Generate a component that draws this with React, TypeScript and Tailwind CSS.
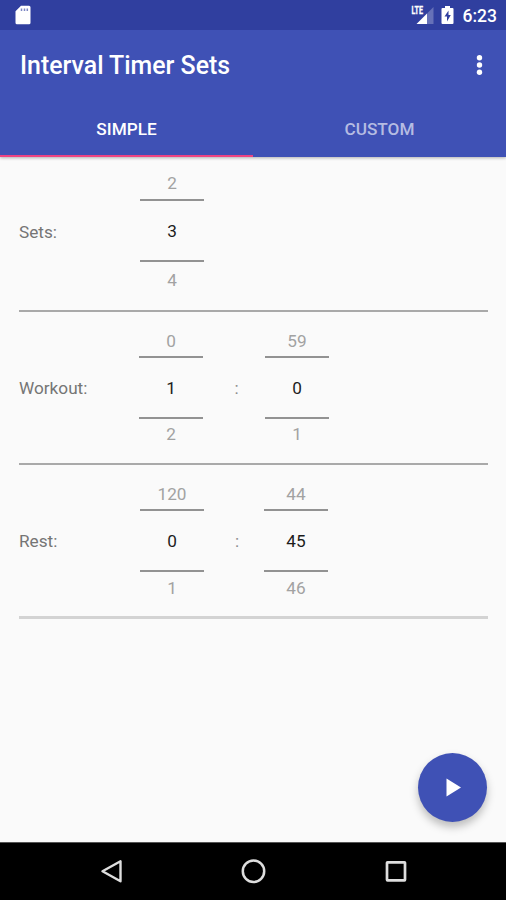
import { useState } from 'react';
import clsx from 'clsx';

interface Wheel {
  prev: number;
  value: number;
  next: number;
}

interface TimerRow {
  label: string;
  wheels: Wheel[];
  // spacing differs a little from row to row
  row: string;
  labelTop: string;
  gap: string;
  prev: string;
  next: string;
  colon: string;
  divider: string;
}

const rows: TimerRow[] = [
  {
    label: 'Sets:',
    wheels: [{ prev: 2, value: 3, next: 4 }],
    row: 'h-[153px] pt-[16px]',
    labelTop: 'mt-[49px]',
    gap: 'ml-[121px]',
    prev: 'mb-[6px]',
    next: 'mt-[8px]',
    colon: '',
    divider: 'h-[2px] bg-[#a9a9a9]',
  },
  {
    label: 'Workout:',
    wheels: [
      { prev: 0, value: 1, next: 2 },
      { prev: 59, value: 0, next: 1 },
    ],
    row: 'h-[151px] pt-[19px]',
    labelTop: 'mt-[47px]',
    gap: 'ml-[120px]',
    prev: 'mb-[5px]',
    next: 'mt-[5px]',
    colon: 'w-[62px] pl-[5px]',
    divider: 'h-[2px] bg-[#a9a9a9]',
  },
  {
    label: 'Rest:',
    wheels: [
      { prev: 120, value: 0, next: 1 },
      { prev: 44, value: 45, next: 46 },
    ],
    row: 'h-[151px] pt-[19px]',
    labelTop: 'mt-[47px]',
    gap: 'ml-[121px]',
    prev: 'mb-[5px]',
    next: 'mt-[6px]',
    colon: 'w-[60px] pl-[6px]',
    divider: 'h-[3px] bg-[#d3d3d3]',
  },
];

function NumberWheel({ wheel, prev, next }: { wheel: Wheel; prev: string; next: string }) {
  return (
    <div className="w-16 text-center text-[17.2px] leading-5">
      <div className={clsx('text-[#a2a2a2]', prev)}>{wheel.prev}</div>
      <div className="flex h-[63px] items-center justify-center border-y-2 border-[#929292] pt-[1px] text-[#1c1c1c]">
        {wheel.value}
      </div>
      <div className={clsx('text-[#a2a2a2]', next)}>{wheel.next}</div>
    </div>
  );
}

function StatusBar() {
  return (
    <div className="flex h-[30px] items-center bg-[#303f9f] pr-[9px] pl-[15px] text-white">
      <svg width="16" height="20" viewBox="0 0 16 20" fill="currentColor">
        <path d="M6 .8h8A1.500 1.500 0 0 1 15.500 2.300v15.500a1.500 1.500 0 0 1-1.500 1.500H2a1.500 1.500 0 0 1-1.500-1.500V6.300z" />
        <path d="M6.500 3.500V6M9.500 3.500V6M12.300 3.500V6" stroke="#7d87c4" strokeWidth="1.500" />
      </svg>
      <div className="ml-auto flex items-center">
        <svg width="24" height="20" viewBox="0 0 24 20">
          <path d="M22.500 2v17H16V8.500z" fill="#6671b8" />
          <path d="M16 8.500V19H5.500z" fill="#fff" />
          <text x="0.500" y="9.300" fill="#fff" stroke="#fff" strokeWidth="0.300" fontFamily="Roboto" fontWeight="700" fontSize="10" textLength="11.500" lengthAdjust="spacingAndGlyphs">
            LTE
          </text>
        </svg>
        <svg className="ml-[6px]" width="13" height="20" viewBox="0 0 13 20">
          <path d="M4 1h5v2h2.500a1 1 0 0 1 1 1v14a1 1 0 0 1-1 1h-10a1 1 0 0 1-1-1V4a1 1 0 0 1 1-1H4z" fill="#fff" />
          <path d="M7.500 5.500 3.500 11.500H6V16.500L9.800 10H7.500z" fill="#303f9f" />
        </svg>
        <span className="ml-[9px] pt-[2px] text-[17.5px] leading-5 font-medium">6:23</span>
      </div>
    </div>
  );
}

export default function App() {
  const [tab, setTab] = useState('SIMPLE');

  return (
    <div className="flex h-[900px] w-[506px] flex-col bg-[#fafafa] font-[Roboto,sans-serif]">
      <header className="z-10 shadow-[0_1px_3px_rgba(0,0,0,0.3)]">
        <StatusBar />
        <div className="bg-[#3f51b5] text-white">
          <div className="flex h-[71px] items-center justify-between pr-[23px] pl-5">
            <h1 className="text-[24.9px] leading-8 font-medium">Interval Timer Sets</h1>
            <button aria-label="More options">
              <svg width="7" height="22" viewBox="0 0 7 22" fill="currentColor">
                <circle cx="3.500" cy="2.700" r="2.700" />
                <circle cx="3.500" cy="10" r="2.700" />
                <circle cx="3.500" cy="17.300" r="2.700" />
              </svg>
            </button>
          </div>
          <div className="flex h-14">
            {['SIMPLE', 'CUSTOM'].map((name) => (
              <button
                key={name}
                onClick={() => setTab(name)}
                className={clsx(
                  'flex-1 border-b-[2.5px] pt-[3px] text-[17.2px] font-medium',
                  tab === name ? 'border-[#ee4483] text-white' : 'border-transparent text-[#b5bce2]'
                )}
              >
                {name}
              </button>
            ))}
          </div>
        </div>
      </header>

      <main className="flex flex-1 flex-col pr-[18px] pl-[19px]">
        {rows.map((r) => (
          <section key={r.label}>
            <div className={clsx('flex', r.row)}>
              <span className={clsx('-mr-[121px] w-[121px] text-[17.2px] leading-5 text-[#757575]', r.labelTop)}>{r.label}</span>
              <div className={clsx('flex', r.gap)}>
                {r.wheels.map((w, i) => (
                  <div key={i} className="flex">
                    {i > 0 && (
                      <span className={clsx('mt-[47px] text-center text-[17.2px] leading-5 text-[#8a8a8a]', r.colon)}>:</span>
                    )}
                    <NumberWheel wheel={w} prev={r.prev} next={r.next} />
                  </div>
                ))}
              </div>
            </div>
            <div className={r.divider} />
          </section>
        ))}

        <button
          aria-label="Start timer"
          className="mt-auto mr-px mb-[20px] flex size-[69px] items-center justify-center self-end rounded-full bg-[#3f51b5] text-white shadow-[0_5px_9px_rgba(0,0,0,0.25)]"
        >
          <svg width="16" height="20" viewBox="0 0 16 20" fill="currentColor">
            <path d="M1.500 .5v18L16 9.500z" />
          </svg>
        </button>
      </main>

      <nav className="flex h-[58px] items-center border-t border-[#555] bg-black pl-[100px] text-[#dedede]">
        <svg width="24" height="26" viewBox="0 0 24 26" fill="none" stroke="currentColor" strokeWidth="2.400">
          <path d="M20.500 2.300v20L2.500 12.300z" strokeLinejoin="round" />
        </svg>
        <svg className="ml-[116px]" width="26" height="26" viewBox="0 0 26 26" fill="none" stroke="currentColor" strokeWidth="2.500">
          <circle cx="13.500" cy="12.300" r="10.700" />
        </svg>
        <svg className="ml-[118px]" width="24" height="26" viewBox="0 0 24 26" fill="none" stroke="currentColor" strokeWidth="2.700">
          <rect x="3" y="3.300" width="18" height="18" rx="0.500" />
        </svg>
      </nav>
    </div>
  );
}
